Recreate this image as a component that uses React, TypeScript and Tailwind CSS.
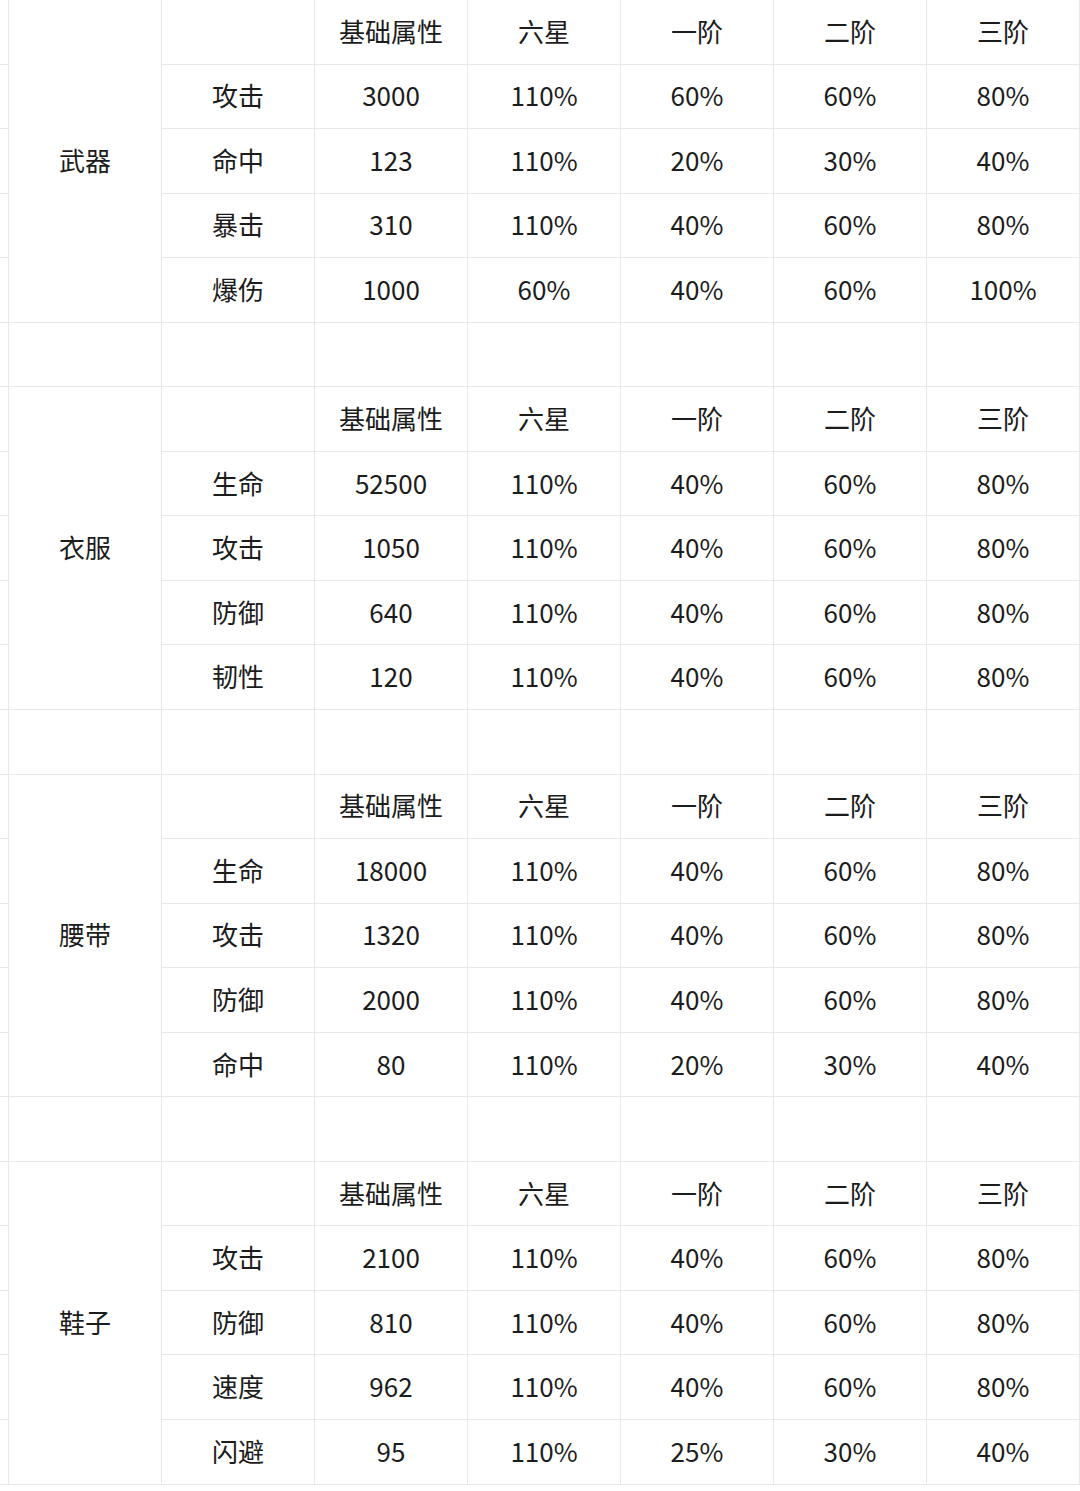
const headers = ["基础属性", "六星", "一阶", "二阶", "三阶"];

type Group = { name: string; rows: [string, string, string, string, string, string][] };

const groups: Group[] = [
  {
    name: "武器",
    rows: [
      ["攻击", "3000", "110%", "60%", "60%", "80%"],
      ["命中", "123", "110%", "20%", "30%", "40%"],
      ["暴击", "310", "110%", "40%", "60%", "80%"],
      ["爆伤", "1000", "60%", "40%", "60%", "100%"],
    ],
  },
  {
    name: "衣服",
    rows: [
      ["生命", "52500", "110%", "40%", "60%", "80%"],
      ["攻击", "1050", "110%", "40%", "60%", "80%"],
      ["防御", "640", "110%", "40%", "60%", "80%"],
      ["韧性", "120", "110%", "40%", "60%", "80%"],
    ],
  },
  {
    name: "腰带",
    rows: [
      ["生命", "18000", "110%", "40%", "60%", "80%"],
      ["攻击", "1320", "110%", "40%", "60%", "80%"],
      ["防御", "2000", "110%", "40%", "60%", "80%"],
      ["命中", "80", "110%", "20%", "30%", "40%"],
    ],
  },
  {
    name: "鞋子",
    rows: [
      ["攻击", "2100", "110%", "40%", "60%", "80%"],
      ["防御", "810", "110%", "40%", "60%", "80%"],
      ["速度", "962", "110%", "40%", "60%", "80%"],
      ["闪避", "95", "110%", "25%", "30%", "40%"],
    ],
  },
];

const cell = "flex items-center justify-center pb-[3px] border-r border-b border-[#e8e8e8]";

function Cell({ children, className = "" }: { children?: React.ReactNode; className?: string }) {
  return <div className={`${cell} ${className}`}>{children}</div>;
}

function GroupBlock({ group, last }: { group: Group; last: boolean }) {
  return (
    <>
      <Cell />
      <Cell className="row-span-5">{group.name}</Cell>
      <Cell />
      {headers.map((h) => (
        <Cell key={h}>{h}</Cell>
      ))}
      {group.rows.map((row, i) => (
        <div key={i} className="contents">
          <Cell />
          {row.map((v, j) => (
            <Cell key={j}>{v}</Cell>
          ))}
        </div>
      ))}
      {!last && Array.from({ length: 8 }).map((_, i) => <Cell key={`b${i}`} />)}
    </>
  );
}

export default function App() {
  return (
    <div
      className="h-[1491px] w-[1080px] overflow-hidden bg-white text-[26px] text-[#1c1c1c]"
      style={{ fontFamily: '"Noto Sans CJK SC", "Noto Sans", sans-serif' }}
    >
      <div className="grid grid-cols-[9px_repeat(7,153px)] auto-rows-[64.55px]">
        {groups.map((g, i) => (
          <GroupBlock key={g.name} group={g} last={i === groups.length - 1} />
        ))}
      </div>
    </div>
  );
}
